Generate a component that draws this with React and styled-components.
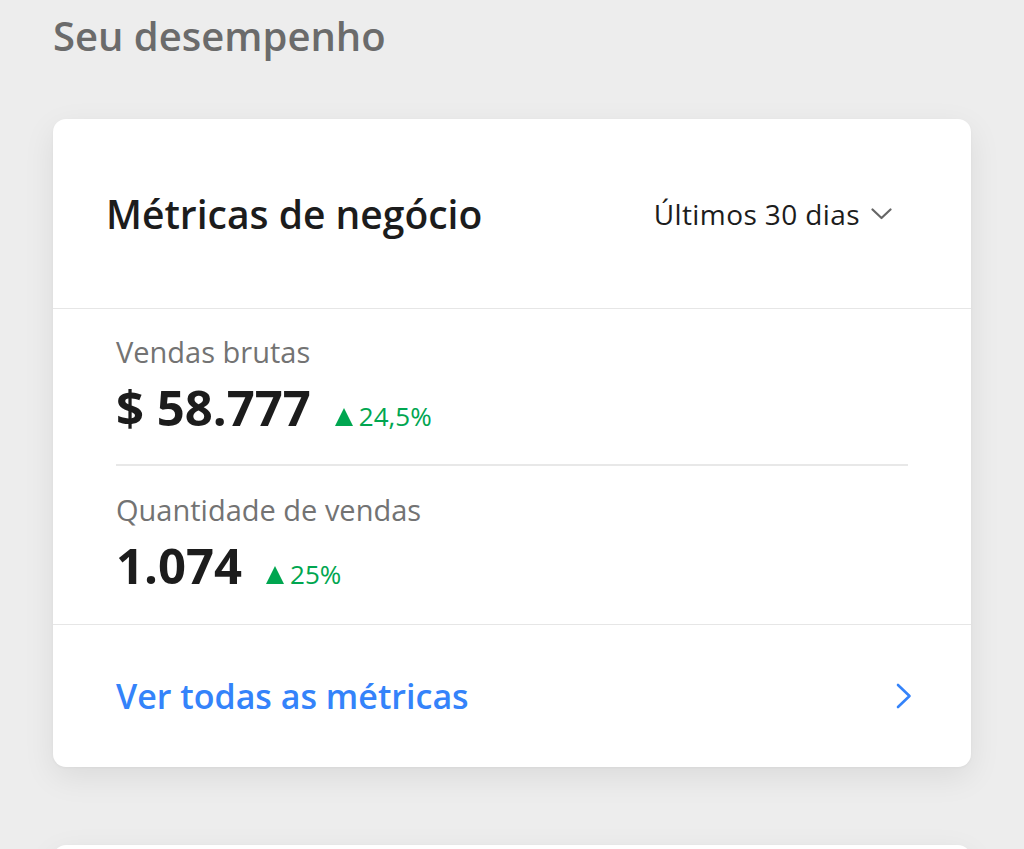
import React from "react";
import styled, { createGlobalStyle } from "styled-components";

const GlobalStyle = createGlobalStyle`
  html, body {
    margin: 0;
    padding: 0;
    background: #ededed;
    font-family: "Open Sans", Lato, sans-serif;
  }
`;

const Page = styled.main`
  padding: 12px 53px 0 53px;
  height: 849px;
  box-sizing: border-box;
  overflow: hidden;
`;

const SectionTitle = styled.h2`
  margin: 0;
  font-size: 40px;
  line-height: 48px;
  font-weight: 600;
  color: #6b6b6b;
`;

const Card = styled.section`
  margin-top: ${(p) => p.$top || 59}px;
  background: #fff;
  border-radius: 13px;
  box-shadow: 0 10px 32px rgba(0, 0, 0, 0.08), 0 1px 3px rgba(0, 0, 0, 0.04);
  min-height: ${(p) => p.$minHeight || 0}px;
`;

const CardHeader = styled.header`
  height: 189px;
  display: flex;
  align-items: center;
  justify-content: space-between;
  padding: 0 79px 0 53px;
  border-bottom: 1px solid #e6e6e6;
`;

const CardTitle = styled.h3`
  margin: 0;
  font-size: 39px;
  font-weight: 600;
  color: #1c1c1c;
`;

const PeriodSelect = styled.button`
  display: flex;
  align-items: center;
  gap: 11px;
  border: 0;
  background: none;
  padding: 0;
  font-family: inherit;
  font-size: 28px;
  letter-spacing: 0.4px;
  color: #1c1c1c;
`;

const Metrics = styled.div`
  padding: 0 63px;
  border-bottom: 1px solid #e6e6e6;
`;

const MetricItem = styled.div`
  padding: ${(p) => (p.$last ? "26px 0 30px" : "25px 0 28px")};
  border-bottom: ${(p) => (p.$last ? "none" : "2px solid #e8e8e8")};
`;

const MetricLabel = styled.div`
  font-size: 29px;
  line-height: 35px;
  color: #737373;
`;

const MetricRow = styled.div`
  display: flex;
  align-items: baseline;
  gap: 24px;
  margin-top: 9px;
`;

const MetricValue = styled.span`
  font-size: 49px;
  line-height: 58px;
  font-weight: 700;
  color: #1c1c1c;
`;

const Delta = styled.span`
  display: inline-flex;
  align-items: baseline;
  gap: 6px;
  font-size: 26px;
  color: #00a650;
`;

const Footer = styled.a`
  height: 142px;
  display: flex;
  align-items: center;
  justify-content: space-between;
  padding: 0 59px 0 63px;
  font-size: 34px;
  font-weight: 600;
  color: #3483fa;
  text-decoration: none;
`;

const UpTriangle = () => (
  <svg width="18" height="18" viewBox="0 0 18 18">
    <path d="M9 0 L18 18 L0 18 Z" fill="#00a650" />
  </svg>
);

const ChevronDown = () => (
  <svg width="21" height="12" viewBox="0 0 21 12">
    <path d="M1.5 1.5 L10.5 10 L19.5 1.5" fill="none" stroke="#666" strokeWidth="2.2" strokeLinecap="round" strokeLinejoin="round" />
  </svg>
);

const ChevronRight = () => (
  <svg width="16" height="26" viewBox="0 0 16 26">
    <path d="M2 2 L13.5 13 L2 24" fill="none" stroke="#3483fa" strokeWidth="2.6" strokeLinecap="round" strokeLinejoin="round" />
  </svg>
);

const metrics = [
  { label: "Vendas brutas", value: "$ 58.777", delta: "24,5%" },
  { label: "Quantidade de vendas", value: "1.074", delta: "25%" },
];

export default function App() {
  return (
    <>
      <GlobalStyle />
      <Page>
        <SectionTitle>Seu desempenho</SectionTitle>
        <Card>
          <CardHeader>
            <CardTitle>Métricas de negócio</CardTitle>
            <PeriodSelect>
              Últimos 30 dias
              <ChevronDown />
            </PeriodSelect>
          </CardHeader>
          <Metrics>
            {metrics.map((m, i) => (
              <MetricItem key={m.label} $last={i === metrics.length - 1}>
                <MetricLabel>{m.label}</MetricLabel>
                <MetricRow>
                  <MetricValue>{m.value}</MetricValue>
                  <Delta>
                    <UpTriangle />
                    {m.delta}
                  </Delta>
                </MetricRow>
              </MetricItem>
            ))}
          </Metrics>
          <Footer href="#">
            Ver todas as métricas
            <ChevronRight />
          </Footer>
        </Card>
        <Card $top={78} $minHeight={200} />
      </Page>
    </>
  );
}
